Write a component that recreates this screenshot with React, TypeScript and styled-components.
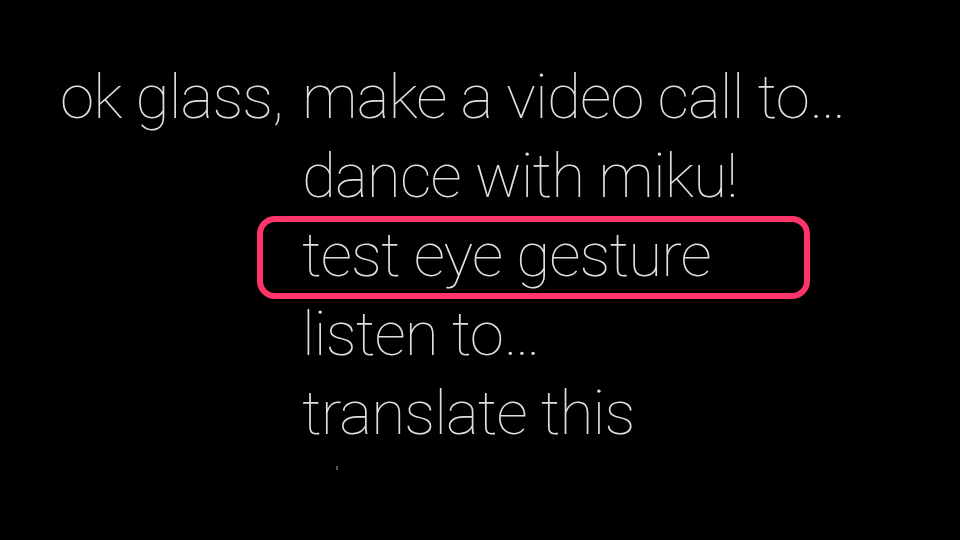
import React from "react";
import styled, { createGlobalStyle } from "styled-components";

const Global = createGlobalStyle`
  html, body { margin: 0; padding: 0; background: #000; }
  body { width: 960px; height: 540px; overflow: hidden; }
`;

const Screen = styled.div`
  width: 960px;
  height: 540px;
  background: #000;
  box-sizing: border-box;
  padding: 57px 0 0 60px;
  display: flex;
  align-items: flex-start;
  gap: 19px;
  font-family: Roboto, "Noto Sans", sans-serif;
  font-weight: 100;
  font-size: 62px;
  letter-spacing: -0.9px;
  color: #dedede;
  overflow: hidden;
`;

const Prompt = styled.div`
  line-height: 79px;
  white-space: nowrap;
`;

const Menu = styled.div`
  display: flex;
  flex-direction: column;
`;

const Item = styled.div<{ $selected?: boolean }>`
  position: relative;
  line-height: 79px;
  white-space: nowrap;
  ${(p) =>
    p.$selected &&
    `
    &::before {
      content: "";
      position: absolute;
      left: -45px;
      top: 1px;
      width: 553px;
      height: 83px;
      box-sizing: border-box;
      border: 6px solid #ff3468;
      border-radius: 18px;
    }
  `}
`;

const Speck = styled.div`
  margin: 14px 0 0 34px;
  width: 2px;
  height: 4px;
  background: #555;
`;

const items = [
  "make a video call to…",
  "dance with miku!",
  "test eye gesture",
  "listen to…",
  "translate this",
];

export default function App() {
  return (
    <>
      <Global />
      <Screen>
        <Prompt>ok glass,</Prompt>
        <Menu>
          {items.map((t, i) => (
            <Item key={t} $selected={i === 2}>
              {t}
            </Item>
          ))}
          <Speck />
        </Menu>
      </Screen>
    </>
  );
}
